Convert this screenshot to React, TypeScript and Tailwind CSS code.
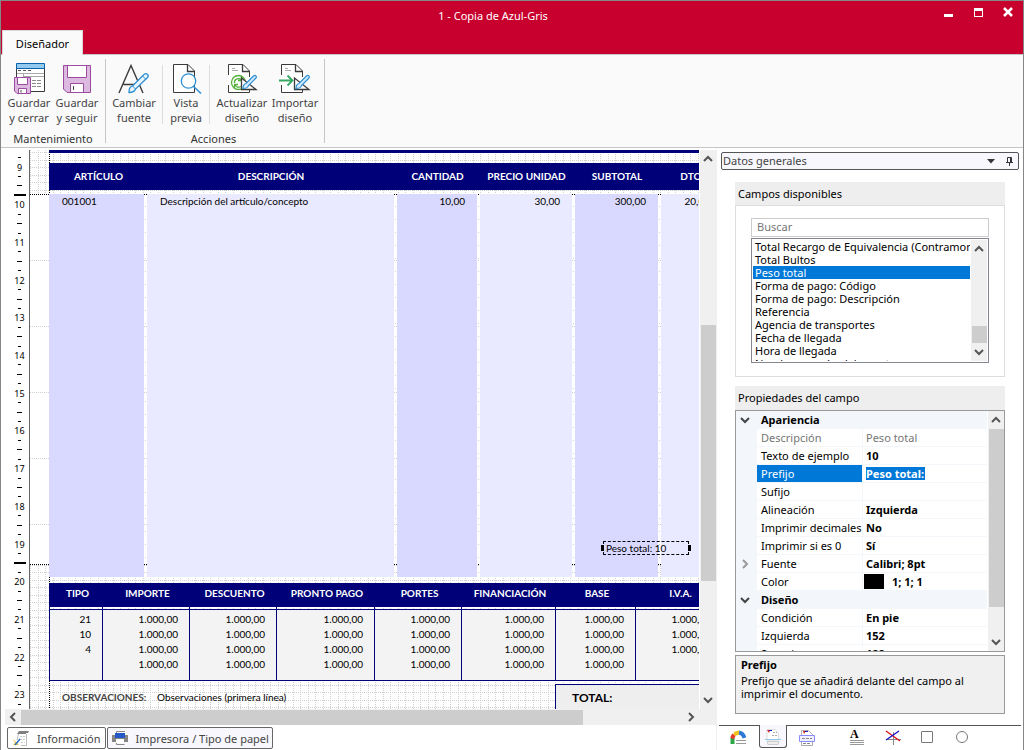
import {ReactNode} from "react";
import clsx from "clsx";

const NUM = "1.000,00";

const fields = [
    "Total Recargo de Equivalencia (Contramoneda)",
    "Total Bultos",
    "Peso total",
    "Forma de pago: Código",
    "Forma de pago: Descripción",
    "Referencia",
    "Agencia de transportes",
    "Fecha de llegada",
    "Hora de llegada",
    "Nombre y razón del agente",
];

type Prop = {
    name: string;
    value?: string;
    kind?: "category" | "disabled" | "expandable" | "color" | "selected";
};

const props: Prop[] = [
    {name: "Apariencia", kind: "category"},
    {name: "Descripción", value: "Peso total", kind: "disabled"},
    {name: "Texto de ejemplo", value: "10"},
    {name: "Prefijo", value: "Peso total:", kind: "selected"},
    {name: "Sufijo", value: ""},
    {name: "Alineación", value: "Izquierda"},
    {name: "Imprimir decimales", value: "No"},
    {name: "Imprimir si es 0", value: "Sí"},
    {name: "Fuente", value: "Calibri; 8pt", kind: "expandable"},
    {name: "Color", value: "1; 1; 1", kind: "color"},
    {name: "Diseño", kind: "category"},
    {name: "Condición", value: "En pie"},
    {name: "Izquierda", value: "152"},
    {name: "Superior", value: "188"},
];

const lineColumns = [
    {title: "ARTÍCULO", value: "001001", width: "w-[95px]", cell: "bg-[#d9d9ff] text-left pl-[13px]"},
    {title: "DESCRIPCIÓN", value: "Descripción del artículo/concepto", width: "w-[250px]", cell: "bg-[#e9e9ff] text-left pl-[13px]"},
    {title: "CANTIDAD", value: "10,00", width: "w-[83px]", cell: "bg-[#d9d9ff] text-right pr-3"},
    {title: "PRECIO UNIDAD", value: "30,00", width: "w-[95px]", cell: "bg-[#e9e9ff] text-right pr-3"},
    {title: "SUBTOTAL", value: "300,00", width: "w-[86px]", cell: "bg-[#d9d9ff] text-right pr-3"},
    {title: "DTO.", value: "20,00", width: "w-[64px]", cell: "bg-[#e9e9ff] text-right pr-3"},
];

const taxColumns = [
    {title: "TIPO", width: "w-[53px]"},
    {title: "IMPORTE", width: "w-[87px]"},
    {title: "DESCUENTO", width: "w-[87px]"},
    {title: "PRONTO PAGO", width: "w-[98px]"},
    {title: "PORTES", width: "w-[87px]"},
    {title: "FINANCIACIÓN", width: "w-[94px]"},
    {title: "BASE", width: "w-[80px]"},
    {title: "I.V.A.", width: "w-[87px]"},
];

const taxRows = [
    ["21", NUM, NUM, NUM, NUM, NUM, NUM, NUM],
    ["10", NUM, NUM, NUM, NUM, NUM, NUM, NUM],
    ["4", NUM, NUM, NUM, NUM, NUM, NUM, NUM],
    ["", NUM, NUM, NUM, NUM, NUM, NUM, ""],
];

const Chevron = ({dir, className}: { dir: "up" | "down" | "left" | "right"; className?: string }) => {
    const paths = {
        up: "M1 7 L5 3 L9 7",
        down: "M1 3 L5 7 L9 3",
        left: "M7 1 L3 5 L7 9",
        right: "M3 1 L7 5 L3 9",
    };
    return (
        <svg viewBox="0 0 10 10" className={clsx("w-[10px] h-[10px]", className)} fill="none" stroke="currentColor" strokeWidth="2">
            <path d={paths[dir]} />
        </svg>
    );
};

const MiniFloppy = () => (
    <g>
        <path d="M1.500 14.500H17.500V30.500H4L1.500 28Z" fill="#dcb9de" stroke="#9c4ba0" />
        <path d="M4.500 14.500H14.500V21.500H4.500Z" fill="#fff" stroke="#9c4ba0" />
        <path d="M5.500 25.500H13.500V30.500H5.500Z" fill="#fff" stroke="#9c4ba0" />
        <path d="M8 27V29.500" stroke="#444" />
    </g>
);

const SaveCloseIcon = () => (
    <svg viewBox="0 0 32 32" className="w-8 h-8" fill="none">
        <path d="M3.500 5V28.500H31.500V5" fill="#fff" stroke="#3b3b3b" />
        <path d="M3.500 .5H31.500V5.500H3.500Z" fill="#94caef" stroke="#0a64ad" />
        <path d="M5 7.500H8M10 7.500H13M15 7.500H18" stroke="#555" />
        <path d="M4 10.500H31M10.500 10.500V14M10.500 13.500H31" stroke="#a9a9a9" />
        <path d="M19 17.500H29M19 20.500H29M19 23.500H29" stroke="#8a8a8a" strokeDasharray="4 1" />
        <MiniFloppy />
    </svg>
);

const SaveIcon = () => (
    <svg viewBox="0 0 32 32" className="w-8 h-8" fill="none" stroke="#9c4ba0">
        <path d="M2.500 2.500H29.500V29.500H6L2.500 26Z" fill="#dcb9de" />
        <path d="M6.500 2.500H25.500V14.500H6.500Z" fill="#fff" />
        <path d="M9.500 20.500H22.500V29.500H9.500Z" fill="#fff" />
        <path d="M12.500 23V27" stroke="#444" />
    </svg>
);

const FontIcon = () => (
    <svg viewBox="0 0 32 32" className="w-8 h-8" fill="none">
        <path d="M1 30L13 2.500L25 30M5.500 21.500H21" stroke="#3b3b3b" strokeWidth="1.400" />
        <path d="M11 29.500C11 25 12 24 14.500 23L26 11.500C28.500 9.500 31.500 12 29.500 14.500L17.500 26C16.500 29 14 29.500 11 29.500Z" fill="#eaf5fd" stroke="#2e8fd3" strokeWidth="1.300" />
        <path d="M14.500 23L17.500 26M24.500 13L28 16.500" stroke="#2e8fd3" />
    </svg>
);

const PreviewIcon = () => (
    <svg viewBox="0 0 32 32" className="w-8 h-8" fill="none">
        <path d="M3.500 1.500H18L24.500 8V29.500H3.500Z" fill="#fff" stroke="#3b3b3b" />
        <path d="M17.500 1.500V8.500H24.500" stroke="#3b3b3b" strokeWidth="1.300" />
        <circle cx="18.500" cy="18" r="7.200" fill="#fff" stroke="#2e8fd3" strokeWidth="1.300" />
        <path d="M23.500 23.500L31 30.500" stroke="#2e8fd3" strokeWidth="1.600" />
    </svg>
);

// Sheet with a set square and a brush, shared by the two design actions
const DesignSheet = ({children}: { children: ReactNode }) => (
    <svg viewBox="0 0 32 32" className="w-8 h-8" fill="none">
        <path d="M2.500 1.500H17L23.500 8V29.500H2.500Z" fill="#fff" />
        <path d="M2.500 12V1.500H17L23.500 8V14M2.500 22V29.500H23.500V27" stroke="#3b3b3b" />
        <path d="M16.500 1.500V8.500H23.500" stroke="#3b3b3b" strokeWidth="1.300" />
        <path d="M6 5.500H9M6 7.500H12" stroke="#aaa" />
        {children}
        <path d="M15.500 15V26.500H30Z" fill="#fff" stroke="#3b3b3b" strokeWidth="1.300" />
        <path d="M17 25.500C17 22 18 21 20 20.500L27.500 13C29.500 11.500 31 13.500 30 15L22.500 22.500C22 25 20 25.500 17 25.500Z" fill="#d4ebfb" stroke="#2e8fd3" strokeWidth="1.200" />
    </svg>
);

const RefreshDesignIcon = () => (
    <DesignSheet>
        <circle cx="12.500" cy="19.500" r="7" fill="#fff" stroke="#55b03c" strokeWidth="1.300" />
        <path d="M8.500 20C8 16.500 12 14.500 15 16.500M15.500 14V17.500H12M8.500 25V21.500H12M9 22C10.500 24.500 13 24.500 15 23.500" stroke="#55b03c" strokeWidth="1.300" />
    </DesignSheet>
);

const ImportDesignIcon = () => (
    <DesignSheet>
        <path d="M0 17.500H13M8.500 12.500L13.500 17.500L8.500 22.500" stroke="#35a862" strokeWidth="1.800" />
    </DesignSheet>
);

const RibbonButton = ({icon, lines, className}: { icon: ReactNode; lines: [string, string]; className: string }) => (
    <button type="button" className={clsx("flex shrink-0 flex-col items-center text-[#444]", className)}>
        {icon}
        <span className="whitespace-nowrap leading-[15px]">{lines[0]}<br />{lines[1]}</span>
    </button>
);

const RibbonGroup = ({title, children, className}: { title: string; children: ReactNode; className: string }) => (
    <section className={clsx("my-1 flex flex-col justify-between border-r border-[#c6c6c6]", className)}>
        <div className="flex pt-1">{children}</div>
        <h2 className="text-center leading-[15px] -mb-[3px] text-[#333]">{title}</h2>
    </section>
);

const Ribbon = () => (
    <div className="flex h-[94px] shrink-0 border-y border-[#c6c6c6] bg-[#fafafa]">
        <RibbonGroup title="Mantenimiento" className="pl-1 pr-1">
            <RibbonButton icon={<SaveCloseIcon />} lines={["Guardar", "y cerrar"]} className="w-12" />
            <RibbonButton icon={<SaveIcon />} lines={["Guardar", "y seguir"]} className="w-12" />
        </RibbonGroup>
        <RibbonGroup title="Acciones" className="pl-[2px] pr-[5px]">
            <RibbonButton icon={<FontIcon />} lines={["Cambiar", "fuente"]} className="w-[52px]" />
            <div className="ml-[2px] mt-[2px] h-[59px] border-l border-[#ddd]" />
            <RibbonButton icon={<PreviewIcon />} lines={["Vista", "previa"]} className="w-[46px]" />
            <div className="mr-[3px] mt-[2px] h-[59px] border-l border-[#ddd]" />
            <RibbonButton icon={<RefreshDesignIcon />} lines={["Actualizar", "diseño"]} className="w-[58px]" />
            <RibbonButton icon={<ImportDesignIcon />} lines={["Importar", "diseño"]} className="w-12" />
        </RibbonGroup>
    </div>
);

const TitleBar = () => (
    <header className="shrink-0 bg-[#c8002d]">
        <div className="relative flex h-[29px] items-center justify-center pr-[38px]">
            <h1 className="text-white">1 - Copia de Azul-Gris</h1>
            <div className="absolute right-[10px] top-[6px] flex items-center gap-5">
                <button type="button" aria-label="Minimizar">
                    <svg viewBox="0 0 10 10" className="w-[10px] h-[10px]"><path d="M1 7H10V10H1Z" fill="#fff" /></svg>
                </button>
                <button type="button" aria-label="Maximizar">
                    <svg viewBox="0 0 10 10" className="w-[10px] h-[10px]"><path d="M1 1H10V10H1ZM2 4V9H9V4Z" fill="#fff" fillRule="evenodd" /></svg>
                </button>
                <button type="button" aria-label="Cerrar">
                    <svg viewBox="0 0 10 10" className="w-[10px] h-[10px]"><path d="M1 1L9 9M9 1L1 9" stroke="#fff" strokeWidth="2.500" /></svg>
                </button>
            </div>
        </div>
        <div className="flex h-6 pl-px">
            <button type="button" className="-mb-px w-[81px] bg-[#fafafa] text-black border-t border-x border-[#d8d8d8] z-10 relative">Diseñador</button>
        </div>
    </header>
);

const Ruler = () => (
    <div className="flex w-[29px] shrink-0 flex-col overflow-hidden border-r border-[#666] bg-white pt-[3px]">
        {Array.from({length: 59}, (_, k) => (
            <div key={k} className="flex min-h-0 flex-1 items-center justify-center pl-[9px]">
                {k % 4 === 1 && <span className="text-[9px] leading-none text-black">{9 + (k - 1) / 4}</span>}
                {(k === 4 || k === 43) && <span className="h-[2px] w-3 bg-black" />}
                {k !== 43 && k % 4 === 3 && <span className="h-px w-[5px] bg-black" />}
                {k !== 4 && k % 2 === 0 && <span className="h-px w-[3px] bg-black" />}
            </div>
        ))}
    </div>
);

// Dotted design grid: fine in the header and footer bands, coarse in the detail band
const Grid = () => (
    <svg className="absolute inset-0 h-full w-full" shapeRendering="crispEdges">
        <defs>
            <pattern id="fine" width="30" height="30" patternUnits="userSpaceOnUse">
                <path d="M8.500 0V30M15.500 0V30M23.500 0V30M.5 0V30M0 2.500H30M0 10.500H30M0 17.500H30M0 25.500H30" stroke="#d0d0d0" strokeDasharray="1 1" />
            </pattern>
            <pattern id="coarse" width="30" height="66" patternUnits="userSpaceOnUse">
                <path d="M0 44.500H30" stroke="#d0d0d0" strokeDasharray="1 1" />
            </pattern>
        </defs>
        <rect width="100%" height="44" fill="url(#fine)" />
        <rect y="46" width="100%" height="368" fill="url(#coarse)" />
        <rect y="415" width="100%" height="160" fill="url(#fine)" />
        {[115, 365, 448, 543, 629].map((x) => (
            <path key={x} d={`M${x}.5 56V414`} stroke="#d0d0d0" strokeDasharray="1 12" />
        ))}
        <path d="M19.500 0V44M19.500 415V700" stroke="#000" strokeDasharray="1 1" />
        <path d="M0 44.500H700M0 414.500H700" stroke="#000" strokeDasharray="1 1" />
    </svg>
);

const LinesTable = () => (
    <table className="mt-[10px] w-[673px] table-fixed border-separate border-spacing-0">
        <thead>
            <tr className="h-[27px] text-white">
                {lineColumns.map((c) => (
                    <th key={c.title} className={clsx("bg-[#000078] p-0 pl-1 font-bold whitespace-nowrap", c.width)}>{c.title}</th>
                ))}
            </tr>
        </thead>
        <tbody>
            <tr className="h-[387px] align-top">
                {lineColumns.map((c, i) => (
                    <td key={c.title} className={clsx("whitespace-nowrap border-t-4 border-transparent bg-clip-padding p-0 leading-[14px]", i > 0 && "border-l-[3px]", c.cell)}>
                        {c.value}
                    </td>
                ))}
            </tr>
        </tbody>
    </table>
);

const TaxTable = () => (
    <table className="mt-[6px] w-[673px] table-fixed border-separate border-spacing-0">
        <thead>
            <tr className="h-6 text-white">
                {taxColumns.map((c) => (
                    <th key={c.title} className={clsx("bg-[#000078] p-0 pl-1 pb-[3px] font-bold whitespace-nowrap", c.width)}>{c.title}</th>
                ))}
            </tr>
        </thead>
        <tbody>
            <tr className="h-[2px]" aria-hidden="true">
                {taxColumns.map((c) => (
                    <td key={c.title} className="border-l border-[#000078] p-0" />
                ))}
            </tr>
            {taxRows.map((row, r) => (
                <tr key={r} className="leading-[15px]">
                    {row.map((value, i) => (
                        <td
                            key={i}
                            className={clsx(
                                "border-l border-[#000078] bg-[#f3f3f3] p-0 pr-[11px] text-right",
                                r === 0 && "border-t pt-[2px]",
                                r === taxRows.length - 1 && "border-b pb-[8px]",
                            )}
                        >
                            {value}
                        </td>
                    ))}
                </tr>
            ))}
        </tbody>
    </table>
);

const ReportPage = () => (
    <div className="relative min-w-0 flex-1 overflow-hidden bg-white">
        <Grid />
        <div className="absolute inset-y-0 left-[19px] w-[673px] font-['Lato',sans-serif] text-[10px] text-black">
            <div className="h-[3px] bg-[#000078]" />
            <LinesTable />
            <TaxTable />
            <div className="mt-[3px] flex h-[60px] leading-[26px]">
                <strong className="w-[108px] shrink-0 pl-[13px] text-[#444]">OBSERVACIONES:</strong>
                <span className="flex-1">Observaciones (primera línea)</span>
                <strong className="w-[167px] border-l border-t border-[#000078] bg-[#eee] pl-4 text-[12px]">TOTAL:</strong>
            </div>
        </div>
        <div className="absolute left-[573px] top-[391px] flex h-[14px] w-[86px] items-center border border-dashed border-black pl-[2px] font-['Lato',sans-serif] text-[10px] text-black">
            Peso total: 10
            <span className="absolute -left-[3px] top-[3px] h-[6px] w-[3px] bg-black" />
            <span className="absolute -right-[3px] top-[3px] h-[6px] w-[3px] bg-black" />
        </div>
    </div>
);

const VerticalScroll = () => (
    <div className="ml-px flex w-4 shrink-0 flex-col items-center bg-[#f0f0f0] text-[#555]">
        <Chevron dir="up" className="my-1 shrink-0" />
        <div className="flex-[157]" />
        <div className="w-[15px] flex-[256] bg-[#cdcdcd]" />
        <div className="flex-[110]" />
        <Chevron dir="down" className="my-1 shrink-0" />
    </div>
);

const HorizontalScroll = () => (
    <div className="ml-1 flex h-4 shrink-0 items-center bg-[#f0f0f0] pr-5 text-[#555]">
        <Chevron dir="left" className="mx-[3px] shrink-0" />
        <div className="h-[15px] flex-[560] bg-[#cdcdcd]" />
        <div className="flex-[103]" />
        <Chevron dir="right" className="shrink-0" />
    </div>
);

const InfoIcon = () => (
    <svg viewBox="0 0 16 16" className="w-4 h-4" fill="none">
        <path d="M6 1H16L15 3H13V4H4Z" fill="#808080" />
        <path d="M5.500 4L4 10M13.500 4V15.500H8" stroke="#bbb" />
        <path d="M7 6.500H12M7 9.500H12M8 12.500H12" stroke="#ccc" strokeDasharray="2 1" />
        <path d="M0 9L2 13L0 15H6Z" fill="#f1c232" />
        <path d="M7 9L2 15" stroke="#2a6fc4" strokeWidth="1.500" />
    </svg>
);

const PrinterIcon = () => (
    <svg viewBox="0 0 16 16" className="w-4 h-4" fill="none">
        <path d="M4.500 4V1.500H13M4.500 12V14.500H12.500" stroke="#888" />
        <path d="M0 5H16V12H12V9H4V12H0Z" fill="#858585" />
        <path d="M3 3H13V8H3Z" fill="#2357c5" />
        <path d="M4 10H12V13H4Z" fill="#fff" />
    </svg>
);

const BottomTabs = () => (
    <div className="mb-px mt-[2px] flex h-[22px] shrink-0 gap-px pl-[6px] text-[#444]">
        <button type="button" className="flex items-center gap-2 whitespace-nowrap rounded-[2px] border border-[#666] bg-white pl-[5px] pr-1">
            <InfoIcon />Información
        </button>
        <button type="button" className="flex items-center gap-2 whitespace-nowrap rounded-[2px] border border-[#666] bg-[#f7f7fd] pl-1 pr-[3px]">
            <PrinterIcon />Impresora / Tipo de papel
        </button>
    </div>
);

const FieldList = () => (
    <section>
        <h3 className="h-[23px] bg-[#eee] pl-[3px] leading-[23px] text-black">Campos disponibles</h3>
        <div className="border border-[#ddd] px-[15px] pb-[13px] pt-3">
            <input type="text" placeholder="Buscar" aria-label="Buscar" className="block h-[19px] w-full border border-[#ccc] bg-white px-[5px] pb-[2px] outline-none placeholder:text-[#767676]" />
            <div className="mt-px flex h-[125px] border border-[#828790] bg-white p-px">
                <ul role="listbox" aria-label="Campos" className="min-w-0 flex-1 overflow-hidden text-black">
                    {fields.map((f) => (
                        <li
                            key={f}
                            role="option"
                            aria-selected={f === "Peso total"}
                            className={clsx("h-[13px] whitespace-nowrap pl-[2px] leading-[13px]", f === "Peso total" && "bg-[#0078d7] text-white")}
                        >
                            {f}
                        </li>
                    ))}
                </ul>
                <div className="ml-px flex w-4 flex-col items-center bg-[#f0f0f0] text-[#555]">
                    <Chevron dir="up" className="mt-1" />
                    <div className="flex-1" />
                    <div className="mb-1 h-[17px] w-[15px] bg-[#cdcdcd]" />
                    <Chevron dir="down" className="mb-1" />
                </div>
            </div>
        </div>
    </section>
);

const PropertyRow = ({item}: { item: Prop }) => {
    if (item.kind === "category") {
        return (
            <tr className="h-[18px] bg-[#f3f6fb]">
                <td className="p-0 pl-1"><Chevron dir="down" className="text-[#444]" /></td>
                <th colSpan={2} className="p-0 pl-1 pb-px text-left font-bold">{item.name}</th>
            </tr>
        );
    }
    return (
        <tr className={clsx("h-[18px]", item.kind === "disabled" && "text-[#767676]")}>
            <td className="bg-[#f3f6fb] p-0 pl-1">
                {item.kind === "expandable" && <Chevron dir="right" className="text-[#999]" />}
            </td>
            <th className={clsx(
                "whitespace-nowrap border-b border-r border-[#f3f6fb] p-0 pl-1 text-left font-normal",
                item.kind === "selected" && "bg-[#0078d7] text-white",
            )}>
                {item.name}
            </th>
            <td className={clsx("whitespace-nowrap border-b border-[#f3f6fb] p-0 pl-[3px]", item.kind !== "disabled" && "font-bold")}>
                {item.kind === "selected" && <span className="bg-[#0078d7] pr-px leading-[13px] text-white inline-block">{item.value}</span>}
                {item.kind === "color" && (
                    <span className="-ml-[2px] flex items-center gap-2">
                        <span className="h-[15px] w-5 bg-black" />{item.value}
                    </span>
                )}
                {item.kind !== "selected" && item.kind !== "color" && item.value}
            </td>
        </tr>
    );
};

const PropertyGrid = () => (
    <section className="flex min-h-0 flex-1 flex-col">
        <h3 className="h-6 shrink-0 bg-[#eee] pl-[3px] leading-6 text-black">Propiedades del campo</h3>
        <div className="flex min-h-0 flex-1 border border-[#999] bg-white">
            <div className="min-w-0 flex-1 overflow-hidden">
                <table className="w-full table-fixed border-separate border-spacing-0 leading-[15px] text-black">
                    <colgroup>
                        <col className="w-[21px]" />
                        <col className="w-[106px]" />
                        <col />
                    </colgroup>
                    <tbody>
                        {props.map((p) => <PropertyRow key={p.name} item={p} />)}
                    </tbody>
                </table>
            </div>
            <div className="ml-px flex w-4 shrink-0 flex-col items-center bg-[#f0f0f0] text-[#555]">
                <Chevron dir="up" className="my-1 shrink-0" />
                <div className="w-[15px] flex-[180] bg-[#cdcdcd]" />
                <div className="flex-[26]" />
                <Chevron dir="down" className="my-1 shrink-0" />
            </div>
        </div>
    </section>
);

const ToolTabs = () => (
    <div className="mx-[2px] mt-[11px] flex h-[25px] shrink-0 items-start border-t border-[#555] pl-[11px]">
        <button type="button" aria-label="Colores" className="pt-1 w-[29px]">
            <svg viewBox="0 0 16 16" className="w-4 h-4" fill="none">
                <path d="M2.500 14V8" stroke="#27a844" strokeWidth="4" />
                <path d="M2 8.500L4 4.500" stroke="#e23b2e" strokeWidth="4" />
                <path d="M4 4L9.500 2.500" stroke="#f3c317" strokeWidth="4" />
                <path d="M9 2.500C12 3 13.500 4.500 14.500 8" stroke="#2b7bd6" strokeWidth="4" />
                <path d="M6 10.500H16M6 13.500H16" stroke="#999" />
            </svg>
        </button>
        <button type="button" aria-label="Datos generales" className="-mt-px flex h-[23px] w-[28px] justify-center rounded-b-[3px] border-x border-b border-[#555] bg-[#f7f7fd] pt-1">
            <svg viewBox="0 0 16 16" className="w-4 h-4" fill="none">
                <path d="M2 .5H10L13.500 4.500V11H2Z" fill="#fff" stroke="#ddd" />
                <path d="M2 1H5L4 4Z" fill="#d22" /><path d="M4 1H7V2H4Z" fill="#22b" />
                <path d="M8 3.500H12M7 6.500H13" stroke="#aaa" strokeDasharray="2 1" />
                <path d="M0 10.500H16" stroke="#8cc4ea" />
                <path d="M2 12.500H14L13 15.500H3Z" fill="#eee" stroke="#ccc" />
            </svg>
        </button>
        <button type="button" aria-label="Detalle" className="ml-[12px] w-[51px] pt-1">
            <svg viewBox="0 0 16 16" className="w-4 h-4" fill="none">
                <path d="M2.500 15.500V.5H9.500L13.500 4.500V15.500Z" fill="#fff" stroke="#aaa" />
                <path d="M4 1H7L5 4Z" fill="#d22" /><path d="M6 1H9V2H6Z" fill="#22b" />
                <path d="M.5 5.500H15.500V11.500H.5Z" fill="#f0f0ff" stroke="#8a8aff" />
                <path d="M3 8.500H13M4 13.500H12" stroke="#888" strokeDasharray="3 1" />
            </svg>
        </button>
        <button type="button" aria-label="Texto" className="flex w-[35px] flex-col items-start pt-[3px]">
            <span className="font-['Liberation_Serif',serif] text-[12px] font-bold leading-[10px] text-black">A</span>
            <svg viewBox="0 0 14 5" className="mt-px h-[5px] w-[14px]"><path d="M0 .5H14M0 2.500H14M0 4.500H14" stroke="#999" /></svg>
        </button>
        <button type="button" aria-label="Línea" className="w-[36px] pt-1">
            <svg viewBox="0 0 16 16" className="w-4 h-4" fill="none">
                <path d="M8.500 2V15M1 9.500H16" stroke="#888" />
                <path d="M1 1L15 11" stroke="#d11" strokeWidth="1.300" />
                <path d="M14 1L1 10" stroke="#11c" strokeWidth="1.300" />
            </svg>
        </button>
        <button type="button" aria-label="Rectángulo" className="mt-[5px] h-3 w-3 rounded-[1px] border border-[#777]" />
        <button type="button" aria-label="Elipse" className="ml-[23px] mt-[5px] h-3 w-3 rounded-full border border-[#777]" />
    </div>
);

const SidePanel = () => (
    <aside className="flex w-[307px] shrink-0 flex-col border-l border-[#f0f0f0] bg-white">
        <div className="ml-1 mr-1 mt-1 flex h-[18px] shrink-0 items-center rounded-[2px] border border-[#555] bg-[#f7f7fd] pl-px pr-[4px] text-[#444]">
            <h2 className="flex-1 pb-px">Datos generales</h2>
            <button type="button" aria-label="Menú" className="mr-[10px]">
                <svg viewBox="0 0 8 5" className="w-[8px] h-[5px]"><path d="M0 0H8L4 4.500Z" fill="#333" /></svg>
            </button>
            <button type="button" aria-label="Anclar">
                <svg viewBox="0 0 9 10" className="w-[9px] h-[10px]" fill="none" stroke="#333"><path d="M2.500 6V1.500H6.500V6M5.500 1V6M1 6.500H8M4.500 6V10" /></svg>
            </button>
        </div>
        <div className="flex min-h-0 flex-1 flex-col gap-[9px] pl-[18px] pr-[18px] pt-3">
            <FieldList />
            <PropertyGrid />
        </div>
        <div className="mx-[18px] mt-[3px] h-[59px] shrink-0 border border-[#999] bg-[#f0f0f0] px-[5px] pt-px text-black">
            <h4 className="font-bold leading-[15px]">Prefijo</h4>
            <p className="mt-[2px] leading-[13px]">Prefijo que se añadirá delante del campo al imprimir el documento.</p>
        </div>
        <ToolTabs />
    </aside>
);

export default function App() {
    return (
        <div className="flex h-screen flex-col overflow-hidden border-x border-t border-[#868686] bg-white font-['Noto_Sans','Open_Sans',sans-serif] text-[11px] leading-[15px]">
            <TitleBar />
            <Ribbon />
            <main className="flex min-h-0 flex-1">
                <div className="flex min-w-0 flex-1 flex-col pt-[2px]">
                    <div className="flex min-h-0 flex-1">
                        <Ruler />
                        <ReportPage />
                        <VerticalScroll />
                    </div>
                    <HorizontalScroll />
                    <BottomTabs />
                </div>
                <SidePanel />
            </main>
        </div>
    );
}
